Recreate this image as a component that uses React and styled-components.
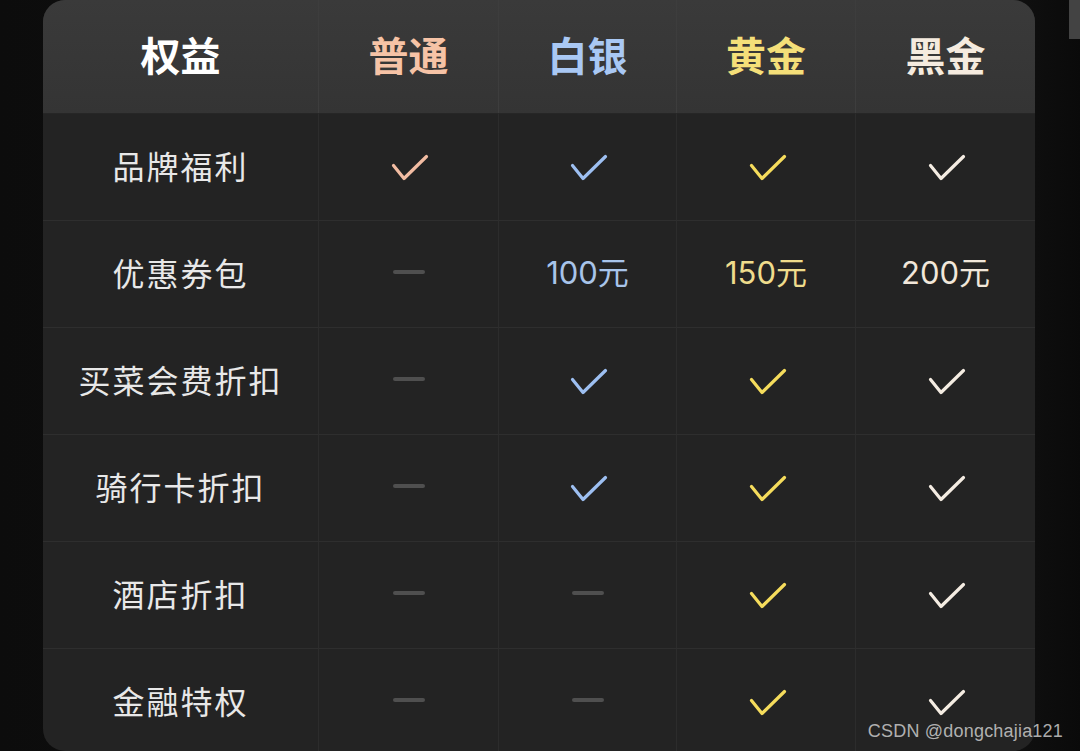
import React from "react";
import styled, { createGlobalStyle } from "styled-components";

const Global = createGlobalStyle`
  html, body { margin: 0; padding: 0; }
  body {
    background: linear-gradient(90deg, #0c0c0c 0%, #111 40%, #121212 92%, #0a0a0a 100%);
    font-family: "Noto Sans CJK SC", "Noto Sans", sans-serif;
    overflow: hidden;
  }
`;

const Page = styled.div`
  width: 1080px;
  height: 751px;
  display: flex;
  align-items: flex-start;
  padding-left: 43px;
  gap: 34px;
  box-sizing: border-box;
  position: relative;
  overflow: hidden;
`;

const Card = styled.div`
  width: 992px;
  height: 751px;
  border-radius: 22px;
  overflow: hidden;
  background: #232323;
  display: grid;
  grid-template-columns: 276px 180px 178px 179px 179px;
  grid-template-rows: 113px repeat(6, 107px);
  flex-shrink: 0;
`;

const SideStub = styled.div`
  width: 11px;
  height: 39px;
  background: #434343;
  flex-shrink: 0;
`;

const HeadCell = styled.div`
  display: flex;
  align-items: center;
  justify-content: center;
  padding-bottom: 6px;
  box-sizing: border-box;
  background: linear-gradient(180deg, #3a3a3a 0%, #343434 100%);
  border-right: ${(p) => (p.$last ? "none" : "1px solid #3d3d3d")};
  font-size: 40px;
  font-weight: 700;
  color: ${(p) => p.$color};
  line-height: 1;
`;

const Cell = styled.div`
  display: flex;
  align-items: center;
  justify-content: center;
  border-top: 1px solid ${(p) => (p.$first ? "#262626" : "#2e2e2e")};
  border-right: ${(p) => (p.$last ? "none" : "1px solid #2c2c2c")};
  box-sizing: border-box;
`;

const Label = styled.span`
  font-size: 32px;
  letter-spacing: 2px;
  color: #e8e8e8;
  line-height: 1;
  margin-top: -4px;
`;

const Value = styled.span`
  font-size: 31px;
  color: ${(p) => p.$color};
  line-height: 1;
  margin-top: -4px;
  font-family: Inter, "Noto Sans CJK SC", "Noto Sans", sans-serif;
`;

const Dash = styled.span`
  display: block;
  width: 32px;
  height: 4px;
  border-radius: 2px;
  background: #4f4f4f;
  margin-top: -4px;
`;

const CheckMark = styled.svg`
  display: block;
  margin-left: 3px;
  margin-top: 1px;
`;

const Watermark = styled.div`
  position: absolute;
  right: 17px;
  bottom: 9px;
  font-family: "Liberation Sans", Arial, sans-serif;
  font-size: 18px;
  color: rgba(215, 215, 215, 0.8);
  letter-spacing: 0.2px;
`;

const Check = ({ color }) => (
  <CheckMark width="38" height="28" viewBox="0 0 38 28">
    <path
      d="M2.5 11.5 L13 24.5 L35.5 2.5"
      fill="none"
      stroke={color}
      strokeWidth="3.2"
      strokeLinecap="round"
      strokeLinejoin="round"
    />
  </CheckMark>
);

const tiers = [
  { name: "普通", head: "#f6c3a6", check: "#f2bca2", value: "#f2bca2" },
  { name: "白银", head: "#a9c8f4", check: "#9dbff1", value: "#a8c4ea" },
  { name: "黄金", head: "#f4df79", check: "#f5dc5c", value: "#efdc8c" },
  { name: "黑金", head: "#f5ebdf", check: "#f4ece2", value: "#f1e7da" },
];

const rows = [
  { label: "品牌福利", cells: ["c", "c", "c", "c"] },
  { label: "优惠券包", cells: ["-", "100元", "150元", "200元"] },
  { label: "买菜会费折扣", cells: ["-", "c", "c", "c"] },
  { label: "骑行卡折扣", cells: ["-", "c", "c", "c"] },
  { label: "酒店折扣", cells: ["-", "-", "c", "c"] },
  { label: "金融特权", cells: ["-", "-", "c", "c"] },
];

export default function App() {
  return (
    <>
      <Global />
      <Page>
        <Card>
          <HeadCell $color="#ffffff">权益</HeadCell>
          {tiers.map((t, i) => (
            <HeadCell key={t.name} $color={t.head} $last={i === tiers.length - 1}>
              {t.name}
            </HeadCell>
          ))}
          {rows.map((r, ri) => (
            <React.Fragment key={r.label}>
              <Cell $first={ri === 0}>
                <Label>{r.label}</Label>
              </Cell>
              {r.cells.map((c, ci) => (
                <Cell key={ci} $first={ri === 0} $last={ci === r.cells.length - 1}>
                  {c === "c" ? (
                    <Check color={tiers[ci].check} />
                  ) : c === "-" ? (
                    <Dash />
                  ) : (
                    <Value $color={tiers[ci].value}>{c}</Value>
                  )}
                </Cell>
              ))}
            </React.Fragment>
          ))}
        </Card>
        <SideStub />
        <Watermark>CSDN @dongchajia121</Watermark>
      </Page>
    </>
  );
}
